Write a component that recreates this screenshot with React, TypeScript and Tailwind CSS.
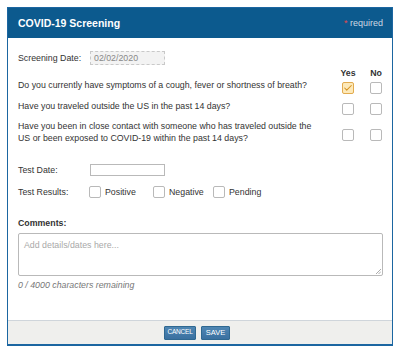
import { Check } from "lucide-react";

function Box({ checked = false }: { checked?: boolean }) {
  return checked ? (
    <span className="flex h-[12px] w-[12px] shrink-0 items-center justify-center rounded-[2px] border border-[#e2ab4f] bg-[#fde9b9]">
      <Check className="h-[10px] w-[10px] text-[#d4901f]" strokeWidth={2.5} />
    </span>
  ) : (
    <span className="block h-[12px] w-[12px] shrink-0 rounded-[2px] border border-[#b9b9b9] bg-white" />
  );
}

function Question({ text, yes = false, rowTop, boxTop }: { text: React.ReactNode; yes?: boolean; rowTop: string; boxTop: string }) {
  return (
    <div className={`flex items-start ${rowTop}`}>
      <p className="flex-1">{text}</p>
      <div className={`flex w-[28px] justify-center ${boxTop}`}>
        <Box checked={yes} />
      </div>
      <div className={`flex w-[28px] justify-center ${boxTop}`}>
        <Box />
      </div>
    </div>
  );
}

export default function App() {
  return (
    <div className="h-[354px] w-[400px] overflow-hidden bg-white pt-[7px] pl-[7px] font-['Liberation_Sans',Arial,sans-serif] text-[8.8px] leading-[12px] text-[#333]">
      <div className="w-[386px] border border-[#1b66a1] border-b-2">
        {/* header */}
        <div className="flex h-[30px] items-center justify-between bg-[#0c5a8e] pl-[10px] pr-[9px]">
          <h1 className="text-[10.5px] font-semibold text-white">COVID-19 Screening</h1>
          <span className="text-[9px] text-[#cbd8e4]">
            <span className="text-[#e5484d]">*</span> required
          </span>
        </div>

        {/* body */}
        <div className="pl-[10px] pr-[2px] pt-[13px] pb-[29px]">
          <div className="flex items-center">
            <span className="w-[72px]">Screening Date:</span>
            <div className="flex h-[14px] w-[75px] items-center border border-dashed border-[#c9c9c9] bg-[#f3f3f3] pl-[3px] text-[#888]">
              02/02/2020
            </div>
          </div>

          <div className="mt-[3px] flex justify-end font-bold leading-[10px]">
            <span className="w-[28px] text-center">Yes</span>
            <span className="w-[28px] text-center">No</span>
          </div>

          <Question text="Do you currently have symptoms of a cough, fever or shortness of breath?" yes rowTop="mt-[1px]" boxTop="mt-[3px]" />
          <Question text="Have you traveled outside the US in the past 14 days?" rowTop="mt-[6px]" boxTop="mt-[3px]" />
          <Question
            text={<>Have you been in close contact with someone who has traveled outside the<br />US or been exposed to COVID-19 within the past 14 days?</>}
            rowTop="mt-[5px]"
            boxTop="mt-[9px]"
          />

          <div className="mt-[20px] flex items-center">
            <span className="w-[72px]">Test Date:</span>
            <div className="h-[12px] w-[75px] border border-[#b9b9b9] bg-white" />
          </div>

          <div className="mt-[10px] flex items-center">
            <span className="w-[71px]">Test Results:</span>
            <label className="flex w-[64px] items-center gap-[4px]"><Box />Positive</label>
            <label className="flex w-[60px] items-center gap-[4px]"><Box />Negative</label>
            <label className="flex items-center gap-[4px]"><Box />Pending</label>
          </div>

          <p className="mt-[19px] font-bold">Comments:</p>
          <div className="relative mt-[4px] mr-[7px] h-[43px] rounded-[2px] border border-[#b9b9b9] bg-white px-[5px] pt-[5px] text-[#a9a9a9]">
            Add details/dates here...
            <svg className="absolute right-[1px] bottom-[1px] h-[6px] w-[6px]" viewBox="0 0 6 6">
              <path d="M1 6L6 1M3.5 6L6 3.5" stroke="#888" strokeWidth="0.7" />
            </svg>
          </div>
          <p className="mt-[3px] italic text-[#777]">0 / 4000 characters remaining</p>
        </div>

        {/* footer */}
        <div className="flex h-[24px] items-center justify-center gap-[5px] border-t border-[#cfd5db] bg-[#efefed] pr-[6px]">
          <button className="h-[14px] w-[32px] rounded-[1px] border border-[#2f6891] bg-gradient-to-b from-[#4f86b3] to-[#3a70a0] text-[6.5px] leading-none tracking-[-0.2px] text-white">
            CANCEL
          </button>
          <button className="h-[14px] w-[29px] rounded-[1px] border border-[#2f6891] bg-gradient-to-b from-[#4f86b3] to-[#3a70a0] text-[7.5px] leading-none text-white">
            SAVE
          </button>
        </div>
      </div>
    </div>
  );
}
